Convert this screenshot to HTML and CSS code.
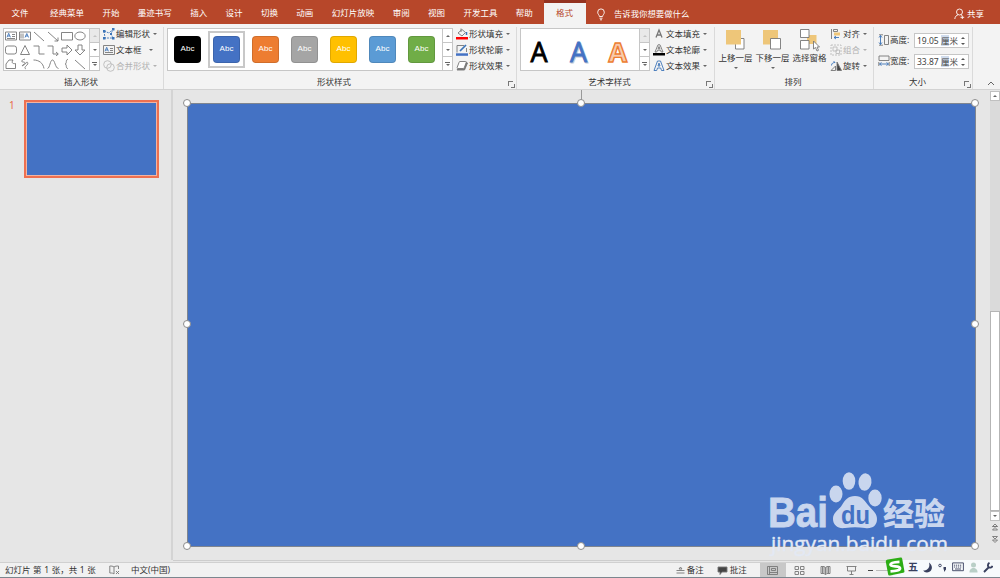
FILE: index.html
```html
<!DOCTYPE html>
<html lang="zh-CN">

<head>
    <meta charset="utf-8">
    <title>形状格式</title>
    <link rel="stylesheet" href="styles.css">
</head>

<body>
    <!-- Ribbon tabs -->
    <div class="tabs">
        <a class="file">文件</a>
        <a>经典菜单</a>
        <a>开始</a>
        <a>墨迹书写</a>
        <a>插入</a>
        <a>设计</a>
        <a>切换</a>
        <a>动画</a>
        <a>幻灯片放映</a>
        <a>审阅</a>
        <a>视图</a>
        <a>开发工具</a>
        <a>帮助</a>
        <a class="active">格式</a>
        <svg class="bulb" width="10" height="13" viewBox="0 0 10 13"><path d="M3.4 8.5C3.4 7 1.7 6.300 1.700 4.200a3.300 3.300 0 0 1 6.600 0C8.300 6.300 6.600 7 6.600 8.500zM3.500 10.200h3M4 11.800h2" /></svg>
        <span class="tell">告诉我你想要做什么</span>
        <span class="share"><svg width="11" height="12" viewBox="0 0 11 12"><circle cx="5.500" cy="4" r="3" /><path d="M.8 11C1 8.500 2.500 7.200 4 6.800M7 6.800l1 .7M8.300 7.500v3.500M6.500 9.300h3.700" /></svg>共享</span>
    </div>

    <!-- Ribbon -->
    <div class="ribbon">
        <div class="group insert">
            <div class="content">
                <div class="gallery">
                    <div class="shapes">
                        <svg viewBox="0 0 12 12"><path d="M.5 2h11v8H.5zM7 4.500h3M7 6.500h3M2 8.500h8" /><path class="blue" d="M2 7.300l1.700-4 1.700 4M2.600 6h2.200" /></svg>
                        <svg viewBox="0 0 12 12"><path d="M.5 2h11v8H.5zM2 3.500v5M4 3.500v5" /><path class="blue" d="M6 7.500l1.800-4 1.800 4M6.700 6h2.200" /></svg>
                        <svg viewBox="0 0 12 12"><path d="M1 2l10 9" /></svg>
                        <svg viewBox="0 0 12 12"><path d="M1 2l10 9M11 7.500V11H7.500" /></svg>
                        <svg viewBox="0 0 12 12"><path d="M.5 2.500h11v7.500H.5z" /></svg>
                        <svg viewBox="0 0 12 12"><ellipse cx="6" cy="6" rx="5.200" ry="4" /></svg>
                        <svg viewBox="0 0 12 12"><rect x=".5" y="2" width="11" height="8" rx="2.200" /></svg>
                        <svg viewBox="0 0 12 12"><path d="M6 1.500l4.500 9h-9z" /></svg>
                        <svg viewBox="0 0 12 12"><path d="M.5 2H6v8h5.500" /></svg>
                        <svg viewBox="0 0 12 12"><path d="M.5 2H6v8h5M9 8l2.300 2L9 12" /></svg>
                        <svg viewBox="0 0 12 12"><path d="M1 4h5V1l5 5-5 5V8H1z" /></svg>
                        <svg viewBox="0 0 12 12"><path d="M4 1h4v5h3l-5 5-5-5h3z" /></svg>
                        <svg viewBox="0 0 12 12"><path d="M1 10.500V6l3-4h4C6 5 8 6 10.500 5.500v5z" /></svg>
                        <svg viewBox="0 0 12 12"><path d="M6 1C2 2 2 4 4 4s3 1 0 3 2 0 3-2 3 0 1 2-3 3-1 4" /></svg>
                        <svg viewBox="0 0 12 12"><path d="M.5 2C6 2 10 5 11 10.500" /></svg>
                        <svg viewBox="0 0 12 12"><path d="M.5 10.500C3 10 3 2 5.500 2S8 10 11.500 10.500" /></svg>
                        <svg viewBox="0 0 12 12"><path d="M7 1.500C4 1.500 6.500 5.500 4 6c2.500.5 0 4.500 3 4.500" /></svg>
                        <svg viewBox="0 0 12 12"><path d="M1 2l10 9" /></svg>
                    </div>
                    <div class="scroller"><b class="up off"></b><b class="down"></b><b class="more"></b></div>
                </div>
                <div class="rows">
                    <div class="cmd arrow"><svg viewBox="0 0 12 12"><path class="blue" stroke-dasharray="2 1" d="M1 3l5 2 4-4M1 3l1 7h8L8 6l2-5" /><path class="bluefill" d="M0 2h2.500v2.500H0zM9 0h2.500v2.500H9zM0 9h2.500v2.500H0zM9 9h2.500v2.500H9zM7 5h2v2H7z" /></svg>编辑形状</div>
                    <div class="cmd arrow wide"><svg viewBox="0 0 12 12"><path d="M.5 1.500h11v9H.5zM7 4.500h3M7 6.500h3M2 8.500h8" /><path class="blue" d="M2 7.300l1.700-4 1.700 4M2.600 6h2.200" /></svg>文本框</div>
                    <div class="cmd arrow disabled"><svg viewBox="0 0 12 12"><circle cx="4.500" cy="4.500" r="3.800" /><circle cx="7.500" cy="7.500" r="3.800" /></svg>合并形状</div>
                </div>
            </div>
            <div class="title">插入形状</div>
        </div>

        <div class="group styles">
            <div class="content">
                <div class="gallery">
                    <div class="swatches">
                        <span class="black">Abc</span>
                        <span class="indigo selected">Abc</span>
                        <span class="orange">Abc</span>
                        <span class="gray">Abc</span>
                        <span class="gold">Abc</span>
                        <span class="sky">Abc</span>
                        <span class="green">Abc</span>
                    </div>
                    <div class="scroller"><b class="up"></b><b class="down"></b><b class="more"></b></div>
                </div>
                <div class="rows">
                    <div class="cmd arrow"><svg viewBox="0 0 12 12"><path d="M2 5l4-3.500 3.500 3L6 8zM5 4V.5" /><path class="blue" d="M10.500 4v3" stroke-width="1.500" /><path fill="#f00" stroke="none" d="M0 9h12v2.500H0z" /></svg>形状填充</div>
                    <div class="cmd arrow"><svg viewBox="0 0 12 12"><path d="M8 1.500H1v7M10.500 4v4" /><path class="blue" d="M4 7l6-6" stroke-width="1.700" /><path fill="#4472c4" stroke="none" d="M0 9.300h12v2.500H0z" /></svg>形状轮廓</div>
                    <div class="cmd arrow"><svg viewBox="0 0 12 12"><path fill="#777" d="M2 8.500L1 10h7.500l3-7-1.500-1-2 6z" /><path fill="#fff" d="M4 1.500h5.500c1 0 .8.700.5 1.500L8.500 7c-.3 1-.7 1.500-1.500 1.500H2C1 8.500 1 8 1.300 7L3 2.500c.3-.8.5-1 1-1z" /></svg>形状效果</div>
                </div>
            </div>
            <div class="title">形状样式<i class="launcher"></i></div>
        </div>

        <div class="group wordart">
            <div class="content">
                <div class="gallery">
                    <svg class="letters" width="118" height="41" viewBox="0 0 118 41">
                        <text x="9.500" y="33" fill="#000" stroke="#000">A</text>
                        <text x="50" y="34" fill="#c3cad6" stroke="#c3cad6">A</text>
                        <text x="49" y="33" fill="#4472c4" stroke="#4472c4">A</text>
                        <text class="bold" x="87.500" y="33" fill="#f8cbad" stroke="#ed7d31">A</text>
                    </svg>
                    <div class="scroller"><b class="up off"></b><b class="down"></b><b class="more"></b></div>
                </div>
                <div class="rows">
                    <div class="cmd arrow"><svg viewBox="0 0 12 12"><path stroke-width="1.300" d="M3 9.500L6 2l3 7.500M4 7h4" /></svg>文本填充</div>
                    <div class="cmd arrow"><svg viewBox="0 0 12 12"><path d="M2 8L5 .8h2L10 8H8.200l-.6-1.800H4.500L3.800 8zM5 4.800h2L6 2.500z" /><path fill="#000" stroke="none" d="M0 9h12v2.500H0z" /></svg>文本轮廓</div>
                    <div class="cmd arrow"><svg viewBox="0 0 12 12"><path class="blue" d="M1 10.500L4.500 1h3L11 10.500H8.500L7.700 8H4.500l-.8 2.500zM5 6h2L6 3z" /></svg>文本效果</div>
                </div>
            </div>
            <div class="title">艺术字样式<i class="launcher"></i></div>
        </div>

        <div class="group arrange">
            <div class="content">
                <div class="big"><svg width="24" height="24" viewBox="0 0 24 24"><path class="front" d="M11.500 9.500h8.500v10.500h-8.500z" /><path class="tan" d="M2 1h15v14.500H2z" /></svg>上移一层<u></u></div>
                <div class="big"><svg width="24" height="24" viewBox="0 0 24 24"><path class="tan" d="M2 1h15v14.500H2z" /><path class="front" d="M9.500 9.500h10v10.500h-10z" /></svg>下移一层<u></u></div>
                <div class="big"><svg width="24" height="24" viewBox="0 0 24 24"><path class="tan" d="M9 6h9.500v9H9z" /><path class="front" d="M2.500.5h8.500v8H2.500zM2.500 11.500h8.500v8.500H2.500z" /><path class="front" d="M15.500 12v8l2-1.500 1.500 3.500 1.500-.7-1.500-3.300h2.500z" /></svg>选择窗格</div>
                <div class="rows">
                    <div class="cmd arrow"><svg viewBox="0 0 12 12"><path d="M1.500 1v10M3.500 1.500h4v2h-4z" /><path class="tan" d="M4 4.500h6v3H4z" /><path class="blue" d="M9 9.500H4l2-1.500M4 9.500l2 1.500" /></svg>对齐</div>
                    <div class="cmd arrow disabled"><svg viewBox="0 0 12 12"><path stroke-dasharray="2 1" d="M1 1h10v10H1z" /><path d="M3 3h4v4H3zM6 6h3.500v3.500H6z" /></svg>组合</div>
                    <div class="cmd arrow"><svg viewBox="0 0 12 12"><path d="M1 10.500h4.500V6z" /><path fill="#444" d="M7 2v8.500h4.500z" /><path class="blue" d="M1.500 5.500c0-2.500 2-3 3.500-3L3.500 1" /></svg>旋转</div>
                </div>
            </div>
            <div class="title">排列</div>
        </div>

        <div class="group size">
            <div class="content">
                <div class="field"><svg viewBox="0 0 12 12"><path d="M6.500 1.500h4v9h-4zM1 .8h4M1 11.200h4" /><path class="blue" d="M2.500 1.500v9M1 3.500l1.500-2 1.500 2M1 8.500l1.500 2 1.500-2" /></svg>高度:<div class="spin">19.05 <em>厘</em>米<s></s></div></div>
                <div class="field"><svg viewBox="0 0 12 12"><path d="M1 1h10v4.500H1zM.8 7v4M11.200 7v4" /><path class="blue" d="M1.500 9h9M3.500 7.500L1.500 9l2 1.500M8.500 7.500l2 1.500-2 1.500" /></svg>宽度:<div class="spin">33.87 <em>厘</em>米<s></s></div></div>
            </div>
            <div class="title">大小<i class="launcher"></i></div>
        </div>
        <svg class="collapse" width="8" height="6" viewBox="0 0 8 6"><path d="M1 5l3-3 3 3" /></svg>
    </div>

    <!-- Slides and canvas -->
    <div class="main">
        <div class="thumbs">
            <span>1</span>
            <div class="thumb"></div>
        </div>
        <div class="canvas">
            <div class="slide">
                <i class="stem"></i>
                <svg class="watermark" width="190" height="90" viewBox="0 0 190 90">
                    <g class="mark">
                        <text class="bai" x="5" y="58" textLength="60" lengthAdjust="spacingAndGlyphs">Bai</text>
                        <ellipse cx="73" cy="25" rx="6.500" ry="8.500" />
                        <ellipse cx="86" cy="12" rx="6.300" ry="8.700" />
                        <ellipse cx="102" cy="13" rx="6.500" ry="8.700" transform="rotate(8 102 13)" />
                        <ellipse cx="112" cy="29" rx="6.700" ry="8.500" />
                        <path d="M92 27c7 0 10 5 13 9 4 5 9 8 9 14 0 7-5 10-12 9-7-1-13-1-20 0-7 1-12-3-12-9 0-7 6-9 9-14 3-5 6-9 13-9z" />
                        <text class="du" x="78" y="55" textLength="29" lengthAdjust="spacingAndGlyphs">du</text>
                        <text class="jy" x="120" y="56" textLength="62" lengthAdjust="spacingAndGlyphs">经验</text>
                        <text class="url" x="8" y="82" textLength="177" lengthAdjust="spacingAndGlyphs">jingyan.baidu.com</text>
                    </g>
                </svg>
                <i class="handle nw"></i><i class="handle n"></i><i class="handle ne"></i>
                <i class="handle w"></i><i class="handle e"></i>
                <i class="handle sw"></i><i class="handle s"></i><i class="handle se"></i>
            </div>
        </div>
        <div class="vscroll">
            <b class="up"></b>
            <div class="track"></div>
            <div class="knob"></div>
            <b class="down"></b>
            <svg width="10" height="28" viewBox="0 0 10 28"><path d="M5 3l2.500 2.500h-5zM5 6.500L7.500 9h-5zM2.500 5.500h5M2.500 15.500h5L5 18zM2.500 19h5L5 21.500z" /></svg>
        </div>
    </div>

    <!-- Status bar -->
    <div class="status">
        <span class="count">幻灯片 第 1 张，共 1 张</span>
        <svg class="book" width="11" height="10" viewBox="0 0 11 10"><path d="M5 2C4 1 2 1 .8 1v7C3 8 4 8 5 9zM5 2c1-1 3-1 4.500-1v3M7 6l3 3M10 6L7 9" /></svg>
        <span>中文(中国)</span>
        <span class="notes"><svg width="9" height="9" viewBox="0 0 9 9"><path d="M.5 4.500h8M.5 7h8M3 3l1.500-2L6 3z" /></svg>备注</span>
        <span class="comments"><svg width="11" height="9" viewBox="0 0 11 9"><path fill="#444" d="M1 1h9v5H5L3 8.500V6H1z" /></svg>批注</span>
        <span class="view on"><svg width="11" height="9" viewBox="0 0 11 9"><path d="M.5.5h10v8H.5zM2.500.5v8M4.500 2.500h4v2h-4zM2.500 6.500h8" /></svg></span>
        <span class="view"><svg width="11" height="9" viewBox="0 0 11 9"><path d="M1 .5h3.500v3H1zM6.500.5H10v3H6.500zM1 5.500h3.500v3H1zM6.500 5.500H10v3H6.500z" /></svg></span>
        <span class="view"><svg width="11" height="9" viewBox="0 0 11 9"><path d="M5.500 1.500L4 .5H1v7h3l1.500 1L7 7.500h3v-7H7zM5.500 1.500v7M2.500 1v6M4 1v6M7 1v6M8.500 1v6" /></svg></span>
        <span class="view"><svg width="11" height="9" viewBox="0 0 11 9"><path d="M.5.500h10M1.500.5v4.500h8V.5M5.500 5v3.500M3.500 8.500h4" /></svg></span>
        <span class="zoomline"></span>
    </div>

    <!-- Floating input method bar -->
    <div class="ime">
        <svg class="sogou" width="20" height="20" viewBox="0 0 20 20"><path fill="#2cad15" d="M3 2.500L15.500.5c1-.1 1.500.4 1.700 1.300L19.400 14c.2 1-.2 1.500-1.200 1.700L5 18.500c-1 .2-1.700-.2-1.900-1.200L.8 4.700C.6 3.500 1.500 2.800 3 2.500z" /><path class="s" d="M14.500 4.800C9 5 5.500 5.500 5.500 7.600c0 3 9.500.5 9.500 3.600 0 2.300-4 2.800-9.500 3.200" /></svg>
        <span>五</span>
        <svg width="10" height="11" viewBox="0 0 10 11"><path fill="#39405f" d="M6 .5C11 4 9 10.500 4 10.500c-2 0-3-1-3.800-2C4.500 8.500 7.500 5.500 6 .5z" /></svg>
        <svg width="9" height="11" viewBox="0 0 9 11"><circle cx="2" cy="3.500" r="1.300" fill="none" stroke="#39405f" /><path fill="#39405f" d="M5.500 5h2.500v2.500L6 10V7.500h-.5z" /></svg>
        <svg width="12" height="10" viewBox="0 0 12 10"><path fill="none" stroke="#39405f" d="M.6.900h10.800v7.800H.6z" /><path stroke="#39405f" stroke-dasharray="1.200 .8" d="M2 3.200h8M2 5h8" /><path stroke="#39405f" d="M3 7h6" /></svg>
        <svg width="9" height="11" viewBox="0 0 9 11"><circle cx="4.500" cy="3" r="2.500" fill="#b9cfc7" /><path fill="#b9cfc7" d="M.5 10.500c-.5-6 8.500-6 8 0z" /></svg>
        <svg width="10" height="11" viewBox="0 0 10 11"><path fill="none" stroke="#39405f" stroke-width="1.900" d="M1 10l4.500-4.500M6.500.8C4.500 2 4.500 4.500 6 5.300s3 .2 3.500-1.500" /></svg>
    </div>
</body>

</html>
```

FILE: styles.css
```css
* {
    box-sizing: border-box
}

body {
    display: flex;
    flex-direction: column;
    width: 1000px;
    height: 578px;
    margin: 0;
    overflow: hidden;
    background: #e6e6e6;
    color: #333;
    font: 8.5px/12px "Noto Sans", "Noto Sans CJK SC", sans-serif;
    white-space: nowrap;
}

svg {
    flex: none;
    fill: none;
    stroke: #777;
    stroke-width: 0.9;
}

.blue {
    stroke: #3c74b8;
}

.bluefill {
    fill: #3c74b8;
    stroke: none;
}

.tan {
    fill: #eec679;
    stroke: none;
}

.front {
    fill: #fff;
}

/* Tabs */
.tabs {
    display: flex;
    flex: none;
    align-items: center;
    height: 24px;
    background: #b7472a;
    color: #fff;
}

.tabs a {
    padding: 2px 9.2px 0;
}

.tabs .file {
    padding: 2px 12.3px 0 11.500px;
}

.tabs .active {
    display: flex;
    align-items: center;
    align-self: stretch;
    width: 42px;
    margin-left: 2px;
    padding: 0 0 1px 12px;
    border-top: 3px solid #943321;
    background: #f3f3f3;
    color: #b7472a;
}

.bulb {
    margin: 4px 8px 0 10px;
    stroke: #fff;
}

.tell {
    padding-top: 3px;
    font-size: 8.4px;
}

.share {
    display: flex;
    align-items: center;
    gap: 2px;
    margin: 3px 16px 0 auto;
}

.share svg {
    stroke: #fff;
}

/* Ribbon */
.ribbon {
    display: flex;
    flex: none;
    height: 66px;
    border-bottom: 1px solid #d2d2d2;
    background: #f3f3f3;
}

.group {
    display: flex;
    flex-direction: column;
    height: 62px;
    margin-top: 3px;
    border-right: 1px solid #dadada;
}

.insert {
    width: 164px;
    padding-left: 3px;
}

.styles {
    width: 353px;
    padding-left: 3px;
}

.wordart {
    width: 198px;
    padding-left: 3px;
}

.arrange {
    width: 159px;
    padding-left: 2px;
}

.size {
    width: 99px;
    padding-left: 4px;
}

.content {
    display: flex;
    height: 49px;
}

.title {
    position: relative;
    padding-right: 15px;
    text-align: center;
}

.insert .title,
.arrange .title {
    padding-right: 4px;
}

.launcher {
    position: absolute;
    right: 3px;
    top: 5px;
    width: 5px;
    height: 5px;
    border: solid #777;
    border-width: 1px 0 0 1px;
}

.launcher::after {
    content: "";
    position: absolute;
    left: 2px;
    top: 2px;
    width: 3px;
    height: 3px;
    border: solid #777;
    border-width: 0 1px 1px 0;
}

.gallery {
    display: flex;
    height: 43px;
    margin-top: 1px;
    border: 1px solid #c6c6c6;
    background: #fff;
}

.shapes {
    display: grid;
    grid-template-columns: repeat(6, 13.9px);
    grid-template-rows: repeat(3, 13.9px);
    place-items: center;
    width: 85px;
}

.shapes svg {
    width: 12px;
    height: 12px;
}

.scroller {
    display: flex;
    flex-direction: column;
    width: 10px;
    border-left: 1px solid #c6c6c6;
}

.scroller b {
    display: flex;
    flex: 1;
    align-items: center;
    justify-content: center;
}

.scroller b + b {
    border-top: 1px solid #c6c6c6;
}

.scroller .off {
    background: #e1e1e1;
    opacity: 0.7;
}

.up::after,
.down::after,
.more::after {
    content: "";
    border: 2px solid transparent;
    border-bottom: 0;
    border-top: 2px solid #666;
}

.up::after {
    transform: rotate(180deg);
}

.off::after {
    border-top-color: #aaa;
}

.more {
    flex-direction: column;
    gap: 1px;
}

.more::before {
    content: "";
    width: 5px;
    height: 1px;
    background: #666;
}

.rows {
    display: flex;
    flex-direction: column;
    width: 57px;
    margin: -1px 0 0 3px;
}

.cmd {
    display: flex;
    align-items: center;
    height: 16px;
}

.cmd svg {
    width: 12px;
    height: 12px;
    margin-right: 1px;
}

.arrow::after {
    content: "";
    margin-left: 3px;
    border: 2px solid transparent;
    border-top-color: #666;
    border-bottom: 0;
}

.wide::after {
    margin-left: 7px;
}

.disabled {
    color: #b1b1b1;
}

.disabled svg {
    stroke: #bbb;
}

.disabled::after {
    border-top-color: #b1b1b1;
}

/* Shape styles */
.swatches {
    display: flex;
    align-items: center;
    width: 274px;
}

.swatches span {
    position: relative;
    flex: none;
    width: 27px;
    height: 27px;
    margin: 0 6px;
    border: 1px solid rgba(0, 0, 0, 0.12);
    border-radius: 4px;
    color: #fff;
    font: 8px/23px "Liberation Sans", sans-serif;
    text-align: center;
}

.swatches .selected::after {
    content: "";
    position: absolute;
    inset: -6px;
    border: 2.500px solid #c8c8c8;
}

.black {
    background: #000;
}

.indigo {
    background: #4472c4;
}

.orange {
    background: #ed7d31;
}

.gray {
    background: #a5a5a5;
}

.gold {
    background: #ffc000;
}

.sky {
    background: #5b9bd5;
}

.green {
    background: #70ad47;
}

.letters {
    font: 27px "Open Sans", sans-serif;
    stroke-width: 0.8;
}

.letters .bold {
    font-weight: bold;
    stroke-width: 1.4;
}

/* Arrange and size */
.big {
    display: flex;
    flex-direction: column;
    align-items: center;
    width: 37px;
    padding-top: 2px;
    line-height: 10px;
}

.big u {
    margin-top: 4px;
    border: 2px solid transparent;
    border-top-color: #666;
    border-bottom: 0;
}

.arrange .rows {
    width: 40px;
    margin-left: 2px;
}

.size .content {
    flex-direction: column;
    gap: 5px;
    padding-top: 5px;
}

.field {
    display: flex;
    align-items: center;
    height: 16px;
}

.field svg {
    width: 12px;
    height: 12px;
}

.spin {
    position: relative;
    width: 55px;
    height: 15px;
    margin-left: auto;
    margin-right: 3px;
    padding-left: 2px;
    border: 1px solid #c6c6c6;
    background: #fff;
    color: #444;
    line-height: 13px;
}

.spin em {
    background: #d0dced;
    font-style: normal;
}

.spin s::before,
.spin s::after {
    content: "";
    position: absolute;
    right: 3px;
    top: 3px;
    border: 2px solid transparent;
    border-top: 0;
    border-bottom-color: #555;
}

.spin s::after {
    top: 9px;
    transform: rotate(180deg);
}

.collapse {
    margin: 56px 0 0 14px;
    stroke: #555;
}

/* Main area */
.main {
    display: flex;
    flex: none;
    height: 472px;
}

.thumbs {
    display: flex;
    width: 173px;
    height: 470px;
    padding: 10px 0 0 9px;
    border-right: 2px solid #d4d4d4;
    color: #e8694a;
    font-size: 10px;
    line-height: 10px;
}

.thumb {
    width: 135px;
    height: 78px;
    margin-left: 9px;
    border: 2px solid #ee7050;
    outline: 1px solid #f2b4a2;
    outline-offset: -3px;
    background: #4472c4;
}

.canvas {
    width: 817px;
    height: 471px;
    padding: 13px 0 0 14px;
    border-bottom: 1px solid #cdcdcd;
}

.slide {
    position: relative;
    width: 789px;
    height: 444px;
    border: 1px solid #7f858f;
    background: #4472c4;
}

.stem {
    position: absolute;
    left: 393px;
    top: -14px;
    width: 1px;
    height: 14px;
    background: #999;
}

.handle {
    position: absolute;
    width: 8px;
    height: 8px;
    margin: -5px;
    border: 1.500px solid #8c8c8c;
    border-radius: 50%;
    background: #fff;
}

.nw {
    left: 0;
    top: 0;
}

.n {
    left: 50%;
    top: 0;
}

.ne {
    left: 100%;
    top: 0;
}

.w {
    left: 0;
    top: 50%;
}

.e {
    left: 100%;
    top: 50%;
}

.sw {
    left: 0;
    top: 100%;
}

.s {
    left: 50%;
    top: 100%;
}

.se {
    left: 100%;
    top: 100%;
}

.ne,
.e,
.se {
    margin-left: -4px;
}

.sw,
.s,
.se {
    margin-top: -4px;
}

.watermark {
    position: absolute;
    left: 575px;
    top: 365px;
    stroke: none;
    overflow: visible;
}

.mark {
    fill: #c9d6ee;
}

.bai {
    font: bold 42px "Liberation Sans", sans-serif;
    stroke: #c9d6ee;
    stroke-width: 0.8;
}

.du {
    fill: #4472c4;
    font: bold 25px "Liberation Sans", sans-serif;
}

.jy {
    font: 900 31px "Noto Sans CJK SC", sans-serif;
}

.url {
    fill: #e3e9f4;
    font: 20.500px "Open Sans", sans-serif;
    stroke: #e3e9f4;
    stroke-width: 0.4;
}

.vscroll {
    display: flex;
    flex-direction: column;
    width: 10px;
    padding-top: 1px;
}

.vscroll b {
    display: flex;
    flex: none;
    align-items: center;
    justify-content: center;
    width: 10px;
    height: 10px;
    border: 1px solid #c0c0c0;
    background: #fff;
}

.track {
    height: 210px;
    background: #dadada;
}

.knob {
    height: 200px;
    border: 1px solid #b5b5b5;
    background: #fff;
}

/* Status bar */
.status {
    display: flex;
    flex: none;
    align-items: center;
    height: 16px;
    border-top: 1px solid #d0d0d0;
    border-bottom: 1px solid #7b868e;
    background: #f1f1f1;
}

.status span {
    display: flex;
    align-items: center;
    gap: 2px;
}

.status .count {
    width: 104px;
    padding-left: 5px;
    word-spacing: 0.4px;
}

.book {
    margin: 0 11px 0 5px;
}

.status .notes {
    margin-left: auto;
}

.status .comments {
    margin: 0 13px;
}

.status .view {
    justify-content: center;
    width: 26.3px;
    height: 14px;
}

.status .on {
    background: #c8c8c8;
}

.status .zoomline {
    width: 135px;
    height: 1px;
    background: linear-gradient(90deg, transparent 3px, #444 3px 8px, transparent 8px 11px, #bbb 11px 24px, transparent 24px);
}

/* Input method bar */
.ime {
    position: absolute;
    left: 885px;
    top: 557px;
    display: flex;
    align-items: center;
    width: 115px;
    height: 20px;
    gap: 5px;
    background: linear-gradient(90deg, transparent 8px, #f7fafc 8px) 0 3px no-repeat;
    color: #39405f;
    font-size: 10px;
    font-weight: bold;
}

.ime svg {
    stroke: none;
}

.ime .s {
    stroke: #fff;
    stroke-width: 2.8;
}

.ime .sogou {
    margin-right: -2px;
}
```
